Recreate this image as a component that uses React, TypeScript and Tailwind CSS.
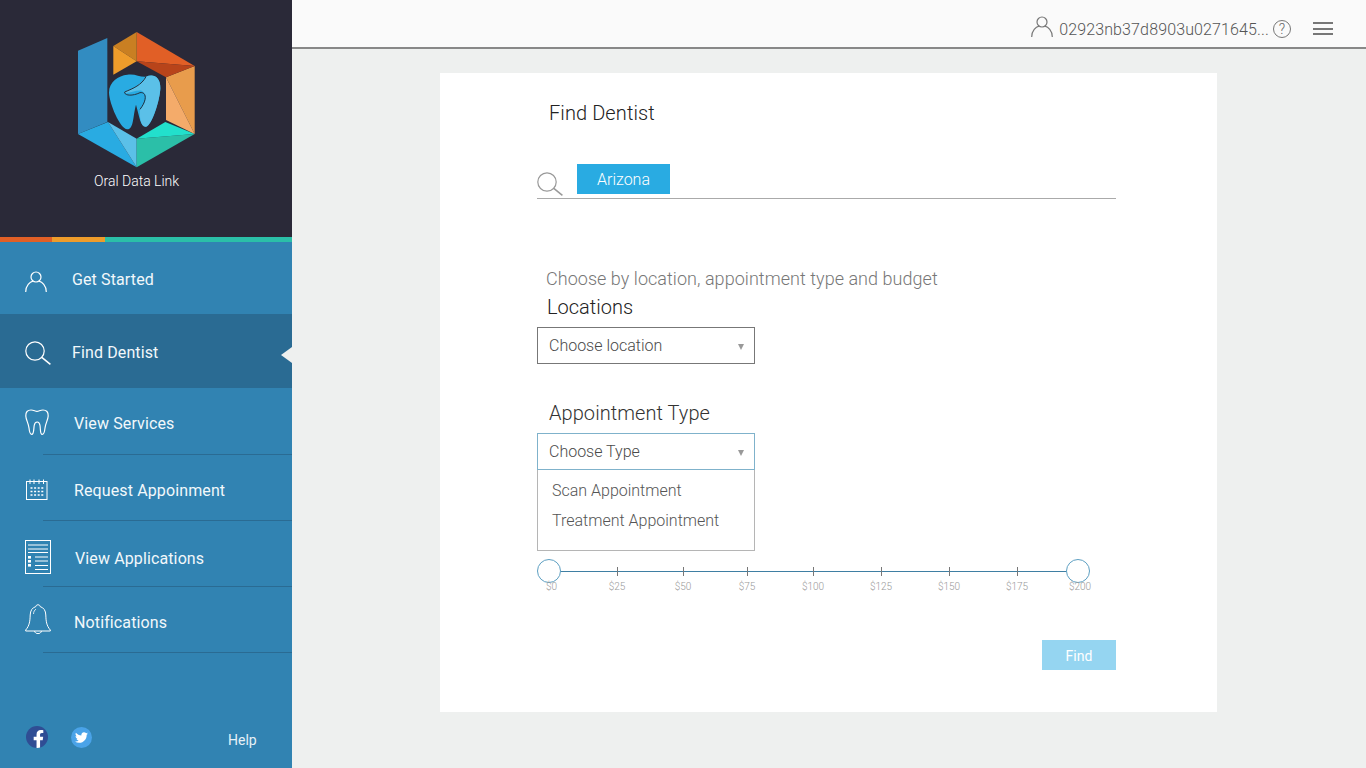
import React from "react";
import { FaFacebookF, FaTwitter } from "react-icons/fa";

const Logo = () => (
  <svg viewBox="0 0 600 540" className="w-[200px] h-[180px] block">
    <polygon points="114,92 202,54 202,306 114,342" fill="#328cc1" />
    <polygon points="114,342 204,306 290,442" fill="#29abe2" />
    <polygon points="204,306 290,356 290,442" fill="#5bc0e8" />
    <polygon points="290,356 464,342 290,442" fill="#2bbfa8" />
    <polygon points="290,356 376,306 464,342" fill="#22e0cc" />
    <polygon points="378,172 464,138 464,342" fill="#e89c4c" />
    <polygon points="378,172 464,342 378,300" fill="#f4ab6a" />
    <polygon points="290,36 464,138 290,124" fill="#e15f26" />
    <polygon points="290,124 464,138 378,172" fill="#b8441a" />
    <polygon points="220,78 290,36 290,124" fill="#c97f22" />
    <polygon points="220,78 290,124 220,164" fill="#ee9c2b" />
    <path d="M262,164 C285,160 300,172 318,170 C340,160 362,170 361,205 C360,240 335,318 318,320 C302,322 298,290 288,254 C278,290 282,326 262,328 C240,326 208,250 207,218 C207,185 235,167 262,164 Z" fill="#29abe2" />
    <path d="M318,170 C340,160 362,170 361,205 C360,240 335,318 318,320 C302,322 298,290 300,270 C318,245 325,225 305,212 C285,210 265,222 252,218 C270,205 300,200 318,170 Z" fill="#5bc0e8" />
    <path d="M318,170 C305,195 280,205 254,216 C252,226 275,230 300,218 C320,215 322,240 300,268" fill="none" stroke="#23303f" strokeWidth="3" />
  </svg>
);

const UserIcon = ({ className, stroke }: { className: string; stroke: string }) => (
  <svg viewBox="0 0 22 21" className={className} fill="none" stroke={stroke} strokeWidth="1.2">
    <circle cx="11" cy="6" r="5" />
    <path d="M0.7 21 C0.7 14.5 5 11 8 10.2 M21.3 21 C21.3 14.5 17 11 14 10.2" />
  </svg>
);

const SearchIcon = ({ className, stroke }: { className: string; stroke: string }) => (
  <svg viewBox="0 0 26 24" className={className} fill="none" stroke={stroke} strokeWidth="1.2">
    <circle cx="10" cy="10" r="9.2" />
    <path d="M16.8 16.4 L25.4 23.4" strokeWidth="1.5" />
  </svg>
);

const ToothIcon = () => (
  <svg viewBox="0 0 24 26" className="w-6 h-[26px]" fill="none" stroke="#fff" strokeWidth="1.2">
    <path d="M6 1 C9 1 10 2.4 12 2.4 C14 2.4 15 1 18 1 C21.5 1 23.4 3 23.2 7 C23 11 20.6 14 20 19 C19.6 23 18.5 25.4 17.2 25.4 C15 25.4 15.6 20 15 16.5 C14.6 14.2 13.4 13 12.2 13 C11 13 9.6 14.2 9.2 16.5 C8.6 20 9 25.4 6.8 25.4 C5.4 25.4 4.4 23 4 19 C3.4 14 1 11 0.8 7 C0.6 3 2.5 1 6 1 Z" />
  </svg>
);

const CalendarIcon = () => (
  <svg viewBox="0 0 22 21" className="w-[22px] h-[21px]" fill="none" stroke="#fff" strokeWidth="1">
    <rect x="0.5" y="2.5" width="20.5" height="18" />
    <path d="M4 0.5 V5 M8 0.5 V5 M13 0.5 V5 M17.5 0.5 V5" />
    <path d="M4.5 9 H17.5 M4.5 12.5 H17.5 M4.5 16 H17.5" strokeWidth="1.6" strokeDasharray="2 1.6" />
  </svg>
);

const ListIcon = () => (
  <svg viewBox="0 0 26 34" className="w-[26px] h-[34px]" fill="none" stroke="#fff">
    <rect x="0.5" y="0.5" width="25" height="33" />
    <path d="M3 5 H23 M3 9 H23 M3 12.5 H23 M10 17 H23 M10 21 H23 M10 25.5 H23 M10 29.5 H23" />
    <rect x="3" y="16" width="3" height="2.6" fill="#fff" stroke="none" />
    <rect x="3" y="20" width="3" height="2.6" fill="#fff" stroke="none" />
    <rect x="3" y="24" width="3" height="2.6" fill="#fff" stroke="none" />
  </svg>
);

const BellIcon = () => (
  <svg viewBox="0 0 26 30" className="w-[26px] h-[30px]" fill="none" stroke="#fff" strokeWidth="1">
    <path d="M13 0.8 C11.6 0.8 11 1.6 10.8 2.6 C7 3.8 5.4 6.6 5.2 11 C5 17 4.6 21.5 0.7 26 L0.7 27 H25.3 V26 C21.4 21.5 21 17 20.8 11 C20.6 6.6 19 3.8 15.2 2.6 C15 1.6 14.4 0.8 13 0.8 Z" />
    <path d="M9.5 27 C10 29 11.4 29.6 13 29.6 C14.6 29.6 16 29 16.5 27" />
    <path d="M8.5 10 C8.6 7.5 9.6 6 11 5.2" strokeWidth="0.8" />
  </svg>
);

type NavRow = {
  label: string;
  icon: React.ReactNode;
  rowClass: string;
  iconClass: string;
  textClass: string;
  divider?: boolean;
};

const rows: NavRow[] = [
  { label: "Get Started", icon: <UserIcon className="w-[22px] h-[21px]" stroke="#fff" />, rowClass: "h-[72px]", iconClass: "ml-[25px] w-[47px] mt-[29px]", textClass: "mt-[28px]" },
  { label: "Find Dentist", icon: <SearchIcon className="w-[26px] h-[24px]" stroke="#fff" />, rowClass: "h-[74px] bg-[#2a6b93]", iconClass: "ml-[25px] w-[47px] mt-[27px]", textClass: "mt-[29px]" },
  { label: "View Services", icon: <ToothIcon />, rowClass: "h-[67px]", iconClass: "ml-[25px] w-[49px] mt-[21px]", textClass: "mt-[26px]", divider: true },
  { label: "Request Appoinment", icon: <CalendarIcon />, rowClass: "h-[66px]", iconClass: "ml-[26px] w-[48px] mt-[24px]", textClass: "mt-[26px]", divider: true },
  { label: "View Applications", icon: <ListIcon />, rowClass: "h-[66px]", iconClass: "ml-[25px] w-[50px] mt-[19px]", textClass: "mt-[28px]", divider: true },
  { label: "Notifications", icon: <BellIcon />, rowClass: "h-[66px]", iconClass: "ml-[25px] w-[49px] mt-[17px]", textClass: "mt-[26px]", divider: true },
];

const Select = ({ label, borderClass }: { label: string; borderClass: string }) => (
  <div className={`w-[218px] h-[37px] border ${borderClass} flex items-center justify-between pl-[11px] pr-[10px] text-[16px] font-light text-[#4a4a4a]`}>
    <span>{label}</span>
    <span className="w-0 h-0 border-l-[3px] border-r-[3px] border-t-[6px] border-l-transparent border-r-transparent border-t-[#999] mt-[3px]" />
  </div>
);

const ticks = [
  { x: 81, label: "$25" },
  { x: 147, label: "$50" },
  { x: 211, label: "$75" },
  { x: 277, label: "$100" },
  { x: 345, label: "$125" },
  { x: 413, label: "$150" },
  { x: 481, label: "$175" },
];

export default function App() {
  return (
    <div className="w-[1366px] h-[768px] overflow-hidden flex bg-[#eef0ef]" style={{ fontFamily: "Roboto, sans-serif" }}>
      <aside className="w-[292px] h-full shrink-0 flex flex-col bg-[#3183b2]">
        <div className="h-[237px] bg-[#2a2938] pl-[40px] pt-[20px] relative">
          <Logo />
          <span className="absolute left-[94px] top-[172px] text-[14px] leading-[18px] text-white font-light">Oral Data Link</span>
        </div>
        <div className="h-[5px] flex">
          <div className="w-[52px] bg-[#e15f26]" />
          <div className="w-[53px] bg-[#ee9c2b]" />
          <div className="flex-1 bg-[#2bbfa8]" />
        </div>
        {rows.map((r) => (
          <div key={r.label} className={`relative flex items-start ${r.rowClass}`}>
            <div className={`${r.iconClass} flex shrink-0`}>{r.icon}</div>
            <span className={`${r.textClass} text-[16px] leading-[20px] tracking-[0.12px] text-[#f2f8fb]`}>{r.label}</span>
            {r.divider && <div className="absolute left-[43px] right-0 bottom-0 h-px bg-[#2a6b93]" />}
            {r.label === "Find Dentist" && (
              <span className="absolute right-0 top-[33px] w-0 h-0 border-t-[8px] border-b-[8px] border-r-[11px] border-t-transparent border-b-transparent border-r-[#eef0ef]" />
            )}
          </div>
        ))}
        <div className="flex items-start pl-[26px] pt-[73px]">
          <div className="w-[22px] h-[22px] rounded-full bg-[#2f4d94] flex items-end justify-center overflow-hidden">
            <FaFacebookF className="w-[17px] h-[18px] text-white translate-x-[1px]" />
          </div>
          <div className="ml-[23px] mt-[1px] w-[21px] h-[21px] rounded-full bg-[#4aa3e8] flex items-center justify-center">
            <FaTwitter className="w-[13px] h-[13px] text-white" />
          </div>
          <span className="ml-[136px] mt-[4px] text-[14px] leading-[20px] text-[#e6f1f7]">Help</span>
        </div>
      </aside>
      <main className="flex-1 flex flex-col">
        <header className="h-[49px] shrink-0 bg-[#fafafa] border-b-2 border-[#888] flex items-start">
          <div className="ml-auto flex items-start">
            <UserIcon className="w-[22px] h-[21px] mt-[16px]" stroke="#777" />
            <span className="ml-[6px] mt-[17px] text-[16px] leading-[26px] tracking-[0.13px] font-light text-[#555]">02923nb37d8903u0271645...</span>
            <span className="ml-[4px] mt-[20px] w-[18px] h-[18px] rounded-full border border-[#777] flex items-center justify-center text-[14px] font-light text-[#666]">?</span>
            <div className="ml-[22px] mr-[33px] mt-[22px] w-5 flex flex-col gap-[3.5px]">
              <div className="h-[2px] bg-[#777]" />
              <div className="h-[2px] bg-[#777]" />
              <div className="h-[2px] bg-[#777]" />
            </div>
          </div>
        </header>
        <section className="ml-[148px] mt-[24px] w-[777px] h-[639px] bg-white pl-[97px] pr-[101px] pt-[26px]">
          <h1 className="ml-[12px] text-[20px] leading-[28px] tracking-[0.09px] font-light text-[#222]">Find Dentist</h1>
          <div className="mt-[37px] h-[35px] border-b border-[#aaa] flex items-start">
            <SearchIcon className="w-[26px] h-[24px] mt-[8px]" stroke="#999" />
            <div className="ml-[14px] w-[93px] h-[30px] bg-[#29abe2] flex items-center justify-center text-[16px] leading-[32px] pt-[2px] font-light text-white">Arizona</div>
          </div>
          <p className="ml-[9px] mt-[67px] text-[18px] leading-[26px] tracking-[0.04px] font-light text-[#777]">Choose by location, appointment type and budget</p>
          <h2 className="ml-[10px] mt-[1px] text-[20px] leading-[28px] font-light text-[#222]">Locations</h2>
          <div className="mt-[6px]">
            <Select label="Choose location" borderClass="border-[#777]" />
          </div>
          <h2 className="ml-[12px] mt-[35px] text-[20px] leading-[28px] tracking-[0.06px] font-light text-[#333]">Appointment Type</h2>
          <div className="mt-[6px]">
            <Select label="Choose Type" borderClass="border-[#7fb2cb]" />
            <div className="w-[218px] h-[81px] border border-t-0 border-[#b5b5b5] pl-[14px] pt-[6px] text-[16px] leading-[30px] font-light text-[#555]">
              <div>Scan Appointment</div>
              <div>Treatment Appointment</div>
            </div>
          </div>
          <div className="relative mt-[8px] h-[48px] w-[579px]">
            <div className="absolute left-[12px] w-[530px] top-[12px] h-px bg-[#3f7fa3]" />
            <div className="absolute left-0 top-0 w-[24px] h-[24px] rounded-full border border-[#5d9fc2] bg-white" />
            <div className="absolute left-[529px] top-0 w-[24px] h-[24px] rounded-full border border-[#5d9fc2] bg-white" />
            <span className="absolute left-[9px] top-[22px] text-[10px] leading-[12px] font-light text-[#999]">$0</span>
            {ticks.map((t) => (
              <React.Fragment key={t.label}>
                <div className="absolute top-[8px] w-px h-[9px] bg-[#777]" style={{ left: t.x - 1 }} />
                <span className="absolute top-[22px] w-[40px] text-center text-[10px] leading-[12px] font-light text-[#999]" style={{ left: t.x - 21 }}>{t.label}</span>
              </React.Fragment>
            ))}
            <span className="absolute left-[523px] top-[22px] w-[40px] text-center text-[10px] leading-[12px] font-light text-[#999]">$200</span>
          </div>
          <div className="mt-[33px] flex justify-end">
            <div className="w-[74px] h-[30px] bg-[#95d5f1] flex items-center justify-center pt-[2px] text-[14px] text-white">Find</div>
          </div>
        </section>
      </main>
    </div>
  );
}
